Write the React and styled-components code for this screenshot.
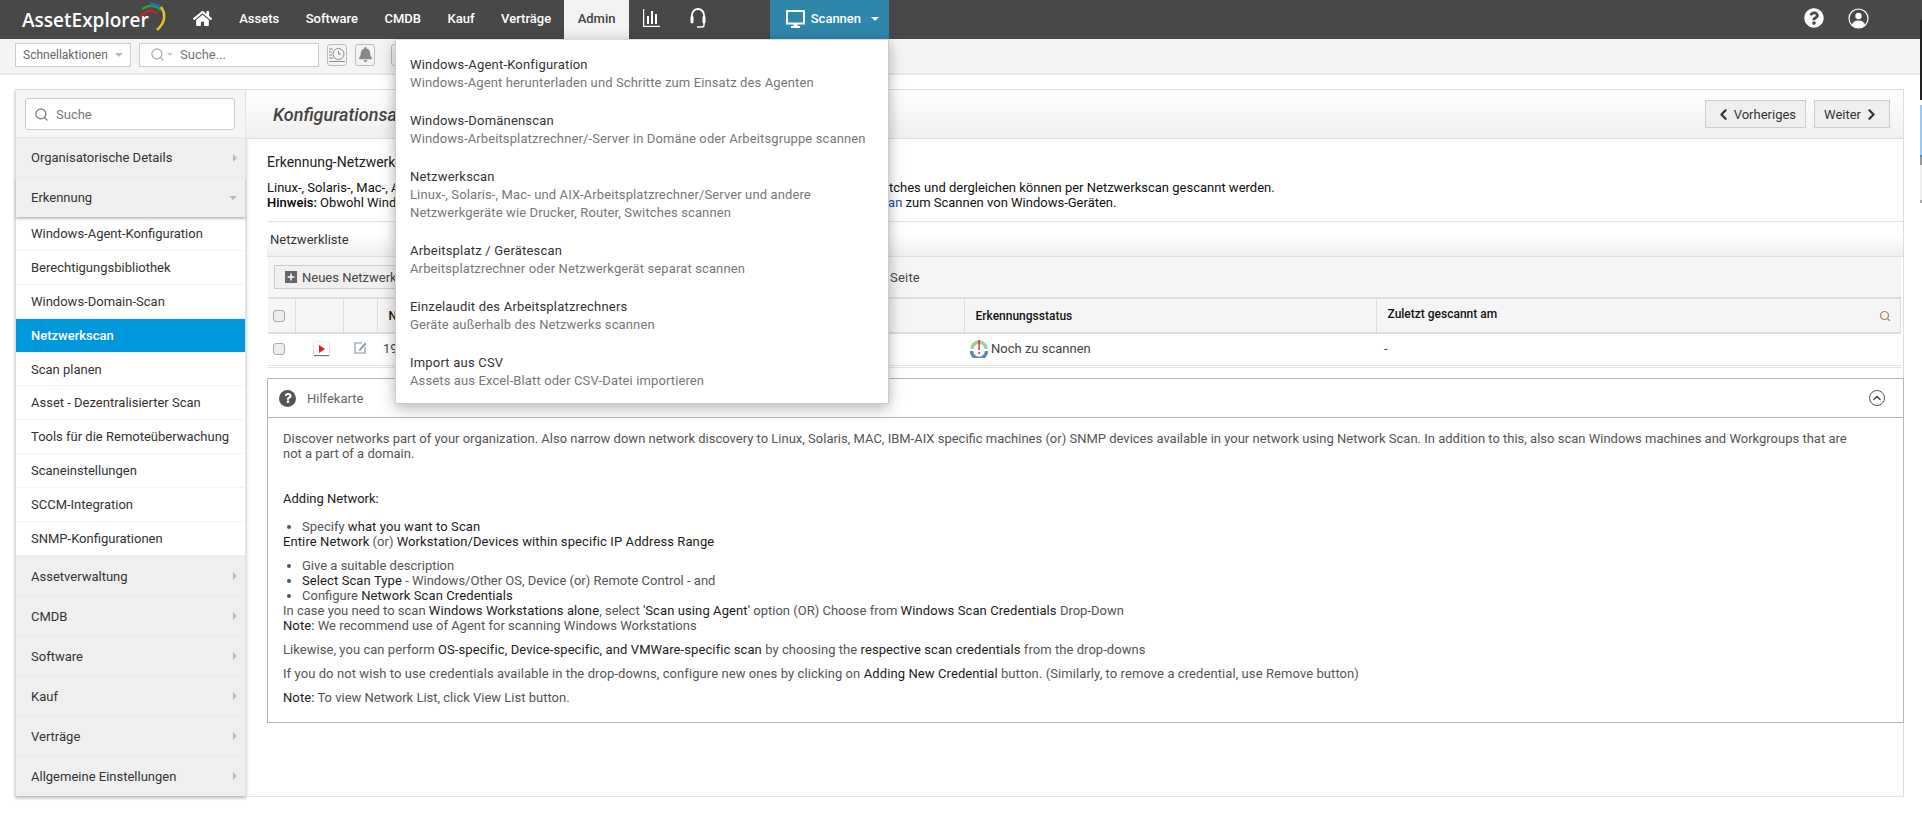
import React from 'react';
import styled, { createGlobalStyle } from 'styled-components';
import { FaHome, FaQuestionCircle, FaQuestion, FaPlus, FaBell } from 'react-icons/fa';
import { ChevronLeft, ChevronRight, ChevronUp, Search } from 'lucide-react';

const navItems = ['Assets', 'Software', 'CMDB', 'Kauf', 'Verträge'];

const scanMenu = [
  { title: 'Windows-Agent-Konfiguration', lines: ['Windows-Agent herunterladen und Schritte zum Einsatz des Agenten'] },
  { title: 'Windows-Domänenscan', lines: ['Windows-Arbeitsplatzrechner/-Server in Domäne oder Arbeitsgruppe scannen'] },
  {
    title: 'Netzwerkscan',
    lines: ['Linux-, Solaris-, Mac- und AIX-Arbeitsplatzrechner/Server und andere', 'Netzwerkgeräte wie Drucker, Router, Switches scannen']
  },
  { title: 'Arbeitsplatz / Gerätescan', lines: ['Arbeitsplatzrechner oder Netzwerkgerät separat scannen'] },
  { title: 'Einzelaudit des Arbeitsplatzrechners', lines: ['Geräte außerhalb des Netzwerks scannen'] },
  { title: 'Import aus CSV', lines: ['Assets aus Excel-Blatt oder CSV-Datei importieren'] }
];

const subItems = [
  'Windows-Agent-Konfiguration',
  'Berechtigungsbibliothek',
  'Windows-Domain-Scan',
  'Netzwerkscan',
  'Scan planen',
  'Asset - Dezentralisierter Scan',
  'Tools für die Remoteüberwachung',
  'Scaneinstellungen',
  'SCCM-Integration',
  'SNMP-Konfigurationen'
];

const lowerGroups = ['Assetverwaltung', 'CMDB', 'Software', 'Kauf', 'Verträge', 'Allgemeine Einstellungen'];

const App = () => {
  return (
    <S.Window>
      <GlobalStyle />
      <S.Page>
        <S.TopBar>
          <S.Logo>
            AssetExplorer
            <S.LogoArcs viewBox="0 0 27 28">
              <path d="M0 14 Q8 4 17 10" fill="none" stroke="#c8232c" strokeWidth="2.4" />
              <path d="M2 6 Q12 -1 21 7" fill="none" stroke="#2f9e44" strokeWidth="2.4" />
              <path d="M10 1 Q21 1 25 10" fill="none" stroke="#1f6fb5" strokeWidth="2.4" />
              <path d="M21 4 Q29 16 17 27" fill="none" stroke="#e8c81e" strokeWidth="2.4" />
            </S.LogoArcs>
          </S.Logo>
          <S.HomeLink>
            <FaHome size={19} color="#fff" />
          </S.HomeLink>
          {navItems.map((item) => (
            <S.NavItem key={item}>{item}</S.NavItem>
          ))}
          <S.NavItem $active>Admin</S.NavItem>
          <S.NavIcon>
            <svg width="17" height="18" viewBox="0 0 17 18" fill="#fff">
              <rect x="0" y="0" width="1.2" height="18" />
              <rect x="0" y="16.8" width="17" height="1.2" />
              <rect x="4" y="7" width="2" height="8" />
              <rect x="8" y="2" width="2" height="13" />
              <rect x="12" y="5" width="2" height="10" />
            </svg>
          </S.NavIcon>
          <S.NavIcon>
            <svg width="18" height="22" viewBox="0 0 18 22" fill="none">
              <path d="M3 11 V8 A6 6 0 0 1 15 8 V11" stroke="#fff" strokeWidth="1.8" />
              <rect x="1.5" y="9" width="3" height="7.5" rx="1.4" fill="#fff" />
              <rect x="13.5" y="9" width="3" height="7.5" rx="1.4" fill="#fff" />
              <path d="M15 16 V18 Q15 20 13 20 H8" stroke="#fff" strokeWidth="1.4" />
            </svg>
          </S.NavIcon>
          <S.ScanButton>
            <svg width="19" height="18" viewBox="0 0 19 18" fill="none">
              <rect x="1" y="1" width="17" height="12.5" stroke="#fff" strokeWidth="2" />
              <rect x="7.5" y="14" width="4" height="2" fill="#fff" />
              <rect x="5" y="16" width="9" height="2" fill="#fff" />
            </svg>
            Scannen
            <S.CaretDown $color="#fff" />
          </S.ScanButton>
          <S.TopRight>
            <FaQuestionCircle size={20} color="#fff" />
            <svg width="21" height="21" viewBox="0 0 21 21" fill="none">
              <circle cx="10.5" cy="10.5" r="9.5" stroke="#fff" strokeWidth="1.2" />
              <circle cx="10.5" cy="8" r="3.2" fill="#fff" />
              <path d="M4 17 Q5 12.5 10.5 12.5 Q16 12.5 17 17 Q14 20 10.5 20 Q7 20 4 17 Z" fill="#fff" />
            </svg>
          </S.TopRight>
        </S.TopBar>

        <S.ToolBar>
          <S.QuickSelect>
            Schnellaktionen
            <S.CaretDown $color="#bbb" />
          </S.QuickSelect>
          <S.ToolSearch>
            <Search size={15} color="#aaa" />
            <S.CaretDown $color="#ccc" $small />
            <S.ToolSearchText>Suche...</S.ToolSearchText>
          </S.ToolSearch>
          <S.ToolIcon>
            <svg width="18" height="18" viewBox="0 0 18 18" fill="none" stroke="#888" strokeWidth="1">
              <circle cx="10.5" cy="8" r="5.5" />
              <path d="M10.5 5 V8 H13" />
              <path d="M1 3 H5 M1 6 H4 M1 9 H4 M1 12 H5 M1 15.5 H17" />
            </svg>
          </S.ToolIcon>
          <S.ToolIcon>
            <FaBell size={15} color="#888" />
          </S.ToolIcon>
          <S.ToolIcon $wide />
        </S.ToolBar>

        <S.Main>
          <S.Sidebar>
            <S.SideSearchWrap>
              <S.SideSearch>
                <Search size={15} color="#777" />
                Suche
              </S.SideSearch>
            </S.SideSearchWrap>
            <S.Group>
              Organisatorische Details
              <S.CaretRight />
            </S.Group>
            <S.Group $open>
              Erkennung
              <S.CaretDown $color="#bbb" />
            </S.Group>
            {subItems.map((item) => (
              <S.SubItem key={item} $active={item === 'Netzwerkscan'}>
                {item}
              </S.SubItem>
            ))}
            {lowerGroups.map((item) => (
              <S.Group key={item}>
                {item}
                <S.CaretRight />
              </S.Group>
            ))}
          </S.Sidebar>

          <S.Content>
            <S.TitleBand>
              <S.PageTitle>Konfigurationsassistent</S.PageTitle>
              <S.PagerButton>
                <ChevronLeft size={17} strokeWidth={3} color="#333" />
                Vorheriges
              </S.PagerButton>
              <S.PagerButton>
                Weiter
                <ChevronRight size={17} strokeWidth={3} color="#333" />
              </S.PagerButton>
            </S.TitleBand>

            <S.Intro>
              <S.IntroTitle>Erkennung-Netzwerkscan</S.IntroTitle>
              <S.IntroText>
                Linux-, Solaris-, Mac-, AIX-Arbeitsplatzrechner/-Server und andere Netzwerkgeräte sowie Drucker, Router, Switches und dergleichen können per
                Netzwerkscan gescannt werden.
                <br />
                <S.Dark>Hinweis:</S.Dark> Obwohl Windows-Geräte per Netzwerkscan gescannt werden, empfehlen wir <S.Link>Windows-Domänenscan</S.Link> zum Scannen
                von Windows-Geräten.
              </S.IntroText>
            </S.Intro>

            <S.ListBand>Netzwerkliste</S.ListBand>
            <S.ListToolbar>
              <S.AddButton>
                <S.PlusBox>
                  <FaPlus size={8} color="#fff" />
                </S.PlusBox>
                Neues Netzwerk
              </S.AddButton>
              <S.PerPage>pro Seite</S.PerPage>
            </S.ListToolbar>

            <S.Table>
              <colgroup>
                <col width="27" />
                <col width="48" />
                <col width="34" />
                <col width="587" />
                <col width="412" />
                <col />
              </colgroup>
              <thead>
                <tr>
                  <S.Th>
                    <S.Check />
                  </S.Th>
                  <S.Th />
                  <S.Th />
                  <S.Th>Netzwerk</S.Th>
                  <S.Th>Erkennungsstatus</S.Th>
                  <S.Th $raised>
                    Zuletzt gescannt am
                    <S.HeaderSearch>
                      <Search size={12} color="#a08850" strokeWidth={2.4} />
                    </S.HeaderSearch>
                  </S.Th>
                </tr>
              </thead>
              <tbody>
                <tr>
                  <S.Td>
                    <S.Check />
                  </S.Td>
                  <S.Td>
                    <S.PlayIcon>
                      <svg width="6" height="8" viewBox="0 0 6 8">
                        <path d="M0 0 L6 4 L0 8 Z" fill="#f01616" />
                      </svg>
                    </S.PlayIcon>
                  </S.Td>
                  <S.Td>
                    <svg width="13" height="13" viewBox="0 0 13 13" fill="none">
                      <path d="M8 2 H1 V12 H11 V6" stroke="#8a9aa8" strokeWidth="1.2" />
                      <path d="M5 8.5 L11 1.5 L12.5 3 L6.5 9.5 L4.5 10 Z" fill="#8a9aa8" />
                    </svg>
                  </S.Td>
                  <S.Td $pad={6}>192.168.1.0</S.Td>
                  <S.Td>
                    <S.Status>
                      <svg width="18" height="18" viewBox="0 0 18 18" fill="none">
                        <path d="M2 9 A7 7 0 0 1 16 9" stroke="#9fce9f" strokeWidth="3.4" />
                        <path d="M1.5 11 A7.5 7.5 0 0 0 16.5 11" stroke="#5a86c2" strokeWidth="3.4" />
                        <rect x="8.4" y="0" width="1.3" height="10" fill="#e01010" />
                        <rect x="8.4" y="12" width="1.3" height="2" fill="#e01010" />
                      </svg>
                      Noch zu scannen
                    </S.Status>
                  </S.Td>
                  <S.Td $pad={8}>-</S.Td>
                </tr>
              </tbody>
            </S.Table>

            <S.HelpCard>
              <S.HelpHeader>
                <S.HelpBadge>
                  <FaQuestion size={10} color="#fff" />
                </S.HelpBadge>
                Hilfekarte
                <S.Collapse>
                  <ChevronUp size={12} strokeWidth={3} color="#444" />
                </S.Collapse>
              </S.HelpHeader>
              <S.HelpBody>
                <S.HelpLead>
                  Discover networks part of your organization. Also narrow down network discovery to Linux, Solaris, MAC, IBM-AIX specific machines (or) SNMP
                  devices available in your network using Network Scan. In addition to this, also scan Windows machines and Workgroups that are not a part of a
                  domain.
                </S.HelpLead>
                <S.HelpHeading>Adding Network:</S.HelpHeading>
                <S.HelpList>
                  <li>
                    Specify <b>what you want to Scan</b>
                  </li>
                </S.HelpList>
                <S.HelpPara>
                  <b>Entire Network</b> (or) <b>Workstation/Devices within specific IP Address Range</b>
                </S.HelpPara>
                <S.HelpList>
                  <li>Give a suitable description</li>
                  <li>
                    <b>Select Scan Type</b> - Windows/Other OS, Device (or) Remote Control - and
                  </li>
                  <li>
                    Configure <b>Network Scan Credentials</b>
                  </li>
                </S.HelpList>
                <S.HelpPara>
                  In case you need to scan <b>Windows Workstations alone</b>, select <b>'Scan using Agent'</b> option (OR) Choose from{' '}
                  <b>Windows Scan Credentials</b> Drop-Down
                  <br />
                  <b>Note:</b> We recommend use of Agent for scanning Windows Workstations
                </S.HelpPara>
                <S.HelpPara $spacing="0.05px">
                  Likewise, you can perform <b>OS-specific, Device-specific, and VMWare-specific scan</b> by choosing the <b>respective scan credentials</b> from
                  the drop-downs
                </S.HelpPara>
                <S.HelpPara $spacing="0.08px">
                  If you do not wish to use credentials available in the drop-downs, configure new ones by clicking on <b>Adding New Credential</b> button.
                  (Similarly, to remove a credential, use Remove button)
                </S.HelpPara>
                <S.HelpPara>
                  <b>Note:</b> To view Network List, click View List button.
                </S.HelpPara>
              </S.HelpBody>
            </S.HelpCard>
          </S.Content>
        </S.Main>

        <S.ScanMenu>
          {scanMenu.map((entry) => (
            <S.MenuEntry key={entry.title}>
              <S.MenuTitle>{entry.title}</S.MenuTitle>
              {entry.lines.map((line) => (
                <S.MenuLine key={line}>{line}</S.MenuLine>
              ))}
            </S.MenuEntry>
          ))}
        </S.ScanMenu>
      </S.Page>
      <S.EdgeStrip />
    </S.Window>
  );
};

export default App;

const GlobalStyle = createGlobalStyle`
  html, body {
    margin: 0;
    padding: 0;
    height: 822px;
    overflow: hidden;
    background: #fff;
    font-family: Roboto, "Liberation Sans", sans-serif;
    font-size: 13px;
    color: #444;
  }
  * {
    box-sizing: border-box;
  }
`;

const S = {
  Window: styled.div`
    display: flex;
    width: 1922px;
    height: 822px;
  `,

  Page: styled.div`
    position: relative;
    width: 1920px;
    height: 822px;
    overflow: hidden;
  `,

  EdgeStrip: styled.div`
    width: 2px;
    height: 822px;
    background: linear-gradient(
      to bottom,
      #484848 0 20px,
      #222 20px 100px,
      #fff 100px 105px,
      #9cc8ef 105px 155px,
      #4a90d0 155px 157px,
      #999 157px 165px,
      #eee 165px 200px,
      #aaa 200px 203px,
      #fff 203px
    );
  `,

  TopBar: styled.div`
    display: flex;
    align-items: stretch;
    height: 39px;
    background: #484848;
    color: #fff;
    font-weight: 500;
  `,

  Logo: styled.div`
    position: relative;
    width: 193px;
    padding: 6px 0 0 22px;
    font-family: "Open Sans", sans-serif;
    font-size: 19px;
    font-weight: 600;
    line-height: 28px;
    color: #fff;
  `,

  LogoArcs: styled.svg`
    position: absolute;
    left: 140px;
    top: 3px;
    width: 27px;
    height: 28px;
    overflow: visible;
  `,

  HomeLink: styled.div`
    display: flex;
    align-items: center;
    width: 33px;
    padding-bottom: 3px;
  `,

  NavItem: styled.div`
    display: flex;
    align-items: center;
    padding: 0 13.25px 2px;
    background: ${(p) => (p.$active ? '#f3f3f3' : 'transparent')};
    color: ${(p) => (p.$active ? '#444' : '#fff')};
  `,

  NavIcon: styled.div`
    display: flex;
    flex: none;
    align-items: center;
    justify-content: center;
    width: 46px;
    padding-bottom: 3px;
  `,

  ScanButton: styled.div`
    display: flex;
    align-items: center;
    gap: 6px;
    width: 119px;
    margin-left: 49px;
    padding: 0 0 2px 16px;
    background: #2f86ab;
  `,

  TopRight: styled.div`
    display: flex;
    align-items: center;
    gap: 24.5px;
    margin-left: auto;
    padding: 0 51px 3px 0;
  `,

  CaretDown: styled.span`
    display: inline-block;
    width: 0;
    height: 0;
    margin-left: ${(p) => (p.$small ? '2px' : '4px')};
    border-left: ${(p) => (p.$small ? '3px' : '4px')} solid transparent;
    border-right: ${(p) => (p.$small ? '3px' : '4px')} solid transparent;
    border-top: ${(p) => (p.$small ? '3px' : '4px')} solid ${(p) => p.$color};
  `,

  CaretRight: styled.span`
    width: 0;
    height: 0;
    border-top: 4px solid transparent;
    border-bottom: 4px solid transparent;
    border-left: 4px solid #bbb;
  `,

  ToolBar: styled.div`
    display: flex;
    align-items: center;
    gap: 8px;
    height: 36px;
    padding: 0 0 3px 15px;
    background: #f4f4f4;
    border-bottom: 2px solid #e6e6e6;
  `,

  QuickSelect: styled.div`
    display: flex;
    align-items: center;
    justify-content: space-between;
    width: 116px;
    height: 24px;
    padding: 0 7px;
    background: #fff;
    border: 1px solid #ccc;
    font-size: 12px;
    color: #666;
  `,

  ToolSearch: styled.div`
    display: flex;
    align-items: center;
    width: 180px;
    height: 24px;
    padding: 0 10px;
    background: #fff;
    border: 1px solid #ccc;
  `,

  ToolSearchText: styled.span`
    margin-left: 7px;
    color: #777;
  `,

  ToolIcon: styled.div`
    display: flex;
    align-items: center;
    justify-content: center;
    width: 20px;
    height: 22px;
    margin-left: ${(p) => (p.$wide ? '8px' : '0')};
    border: 1px solid #bbb;
    border-radius: 3px;
    background: #f4f4f4;
  `,

  Main: styled.div`
    display: flex;
    align-items: flex-start;
    height: 708px;
    margin: 14px 16px 0 15px;
    border-top: 1px solid #ddd;
  `,

  Sidebar: styled.div`
    flex: none;
    width: 231px;
    border-left: 1px solid #ddd;
    border-right: 1px solid #e4e4e4;
    box-shadow: 0 2px 3px rgba(0, 0, 0, 0.3);
    font-size: 13px;
  `,

  SideSearchWrap: styled.div`
    height: 47px;
    padding: 8px 10px 0 9px;
    background: #f5f5f5;
  `,

  SideSearch: styled.div`
    display: flex;
    align-items: center;
    gap: 7px;
    height: 32px;
    padding-left: 8px;
    background: #fff;
    border: 1px solid #ccc;
    border-radius: 3px;
    color: #777;
  `,

  Group: styled.div`
    display: flex;
    align-items: center;
    justify-content: space-between;
    height: 40px;
    padding: 0 8px 0 15px;
    background: #efefef;
    border-top: 1px solid #e8e8e8;
    color: #333;
    box-shadow: ${(p) => (p.$open ? '0 2px 2px rgba(0, 0, 0, 0.25)' : 'none')};
    position: ${(p) => (p.$open ? 'relative' : 'static')};
  `,

  SubItem: styled.div`
    display: flex;
    align-items: center;
    height: 33.9px;
    padding-left: 15px;
    background: ${(p) => (p.$active ? '#0098dc' : '#fff')};
    border-bottom: 1px solid #f3f3f3;
    color: ${(p) => (p.$active ? '#fff' : '#333')};
    font-weight: ${(p) => (p.$active ? 500 : 400)};
  `,

  Content: styled.div`
    flex: 1;
    min-width: 0;
    height: 707px;
    border-right: 1px solid #ddd;
    border-bottom: 1px solid #e4e4e4;
  `,

  TitleBand: styled.div`
    display: flex;
    align-items: center;
    gap: 8px;
    height: 49px;
    padding: 0 13px 0 27px;
    background: linear-gradient(to bottom, #fff, #f0f0f0);
    border-bottom: 1px solid #ddd;
  `,

  PageTitle: styled.div`
    margin-right: auto;
    font-size: 18px;
    font-style: italic;
    font-weight: 500;
    color: #444;
  `,

  PagerButton: styled.div`
    display: flex;
    align-items: center;
    justify-content: center;
    gap: 2px;
    height: 28px;
    padding: 0 9px;
    background: #efefef;
    border: 1px solid #ccc;
    color: #333;
  `,

  Intro: styled.div`
    height: 82px;
    margin-left: 21px;
    padding-top: 14px;
    color: #000;
  `,

  IntroTitle: styled.div`
    font-size: 14px;
    line-height: 18px;
    color: #222;
  `,

  IntroText: styled.div`
    margin-top: 9px;
    font-size: 13px;
    line-height: 15px;
    white-space: nowrap;
    color: #111;
  `,

  Dark: styled.span`
    font-weight: 500;
    color: #000;
  `,

  Link: styled.span`
    color: #2a3fb0;
  `,

  ListBand: styled.div`
    display: flex;
    align-items: center;
    height: 36px;
    margin-left: 21px;
    padding-left: 3px;
    background: linear-gradient(to bottom, #fff 40%, #eee);
    border-top: 1px solid #e2e2e2;
    border-bottom: 1px solid #ddd;
    color: #333;
  `,

  ListToolbar: styled.div`
    display: flex;
    align-items: center;
    height: 42px;
    margin: 0 2px 0 22px;
    padding-left: 6px;
    background: #f5f5f5;
    border-bottom: 2px solid #ddd;
  `,

  AddButton: styled.div`
    display: flex;
    align-items: center;
    gap: 5px;
    width: 200px;
    height: 24px;
    padding-left: 10px;
    background: #f0f0f0;
    border: 1px solid #ccc;
    color: #444;
  `,

  PlusBox: styled.span`
    display: flex;
    align-items: center;
    justify-content: center;
    width: 12px;
    height: 12px;
    background: #666;
  `,

  PerPage: styled.div`
    margin-left: 393px;
    letter-spacing: 0.2px;
    color: #444;
  `,

  Table: styled.table`
    width: calc(100% - 24px);
    height: 69px;
    margin-left: 22px;
    border-collapse: collapse;
    table-layout: fixed;
    border-bottom: 3px double #e4e4e4;
  `,

  Th: styled.th`
    height: 34px;
    padding: ${(p) => (p.$raised ? '0 0 4px 11px' : '0 0 0 11px')};
    position: relative;
    background: #f5f5f5;
    border-right: 1px solid #ddd;
    border-bottom: 2px solid #ddd;
    font-size: 12px;
    font-weight: 500;
    text-align: left;
    color: #111;

    &:first-child {
      padding-left: 5px;
    }
  `,

  Td: styled.td`
    height: 33px;
    padding: 0 0 2px ${(p) => p.$pad ?? 11}px;
    color: #444;

    &:first-child {
      padding-left: 5px;
    }
  `,

  HeaderSearch: styled.span`
    position: absolute;
    right: 9px;
    top: 11px;
  `,

  Check: styled.div`
    width: 12px;
    height: 12px;
    background: #eee;
    border: 1px solid #aaa;
    border-radius: 3px;
  `,

  PlayIcon: styled.span`
    display: flex;
    align-items: center;
    justify-content: center;
    width: 15px;
    height: 13px;
    margin-left: 8px;
    background: #fff;
    box-shadow: 0 1px 1px #777, 0 0 1px #aaa;
  `,

  Status: styled.span`
    display: flex;
    align-items: center;
    gap: 3px;
    margin-left: -5px;
  `,

  HelpCard: styled.div`
    height: 345px;
    margin: 10px -1px 0 21px;
    background: #fff;
    border: 1px solid #b5b5b5;
  `,

  HelpHeader: styled.div`
    display: flex;
    align-items: center;
    height: 39px;
    padding: 0 18px 0 11px;
    border-bottom: 1px solid #b5b5b5;
    color: #666;
  `,

  HelpBadge: styled.span`
    display: flex;
    align-items: center;
    justify-content: center;
    width: 17px;
    height: 17px;
    margin-right: 11px;
    background: #555;
    border-radius: 50%;
  `,

  Collapse: styled.span`
    display: flex;
    align-items: center;
    justify-content: center;
    width: 16px;
    height: 16px;
    margin-left: auto;
    border: 1px solid #555;
    border-radius: 50%;
  `,

  HelpBody: styled.div`
    padding: 13px 40px 0 15px;
    font-size: 13px;
    line-height: 15px;
    color: #555;

    b {
      font-weight: 400;
      letter-spacing: 0.1px;
      color: #1c1c1c;
    }
  `,

  HelpLead: styled.p`
    margin: 0 0 30px;
  `,

  HelpHeading: styled.p`
    margin: 0 0 13px;
    color: #222;
  `,

  HelpList: styled.ul`
    margin: 0;
    padding-left: 19px;
  `,

  HelpPara: styled.p`
    margin: 0 0 9px;
    letter-spacing: ${(p) => p.$spacing ?? 'normal'};
  `,

  ScanMenu: styled.div`
    position: absolute;
    top: 39px;
    left: 395px;
    width: 494px;
    height: 365px;
    padding: 16px 14px 0;
    background: #fff;
    border: 1px solid #ccc;
    border-top-color: #ddd;
    box-shadow: 0 4px 14px rgba(0, 0, 0, 0.3);
  `,

  MenuEntry: styled.div`
    margin-bottom: 20px;
  `,

  MenuTitle: styled.div`
    line-height: 18px;
    letter-spacing: 0.2px;
    color: #333;
  `,

  MenuLine: styled.div`
    line-height: 18px;
    letter-spacing: 0.12px;
    color: #777;
  `
};
